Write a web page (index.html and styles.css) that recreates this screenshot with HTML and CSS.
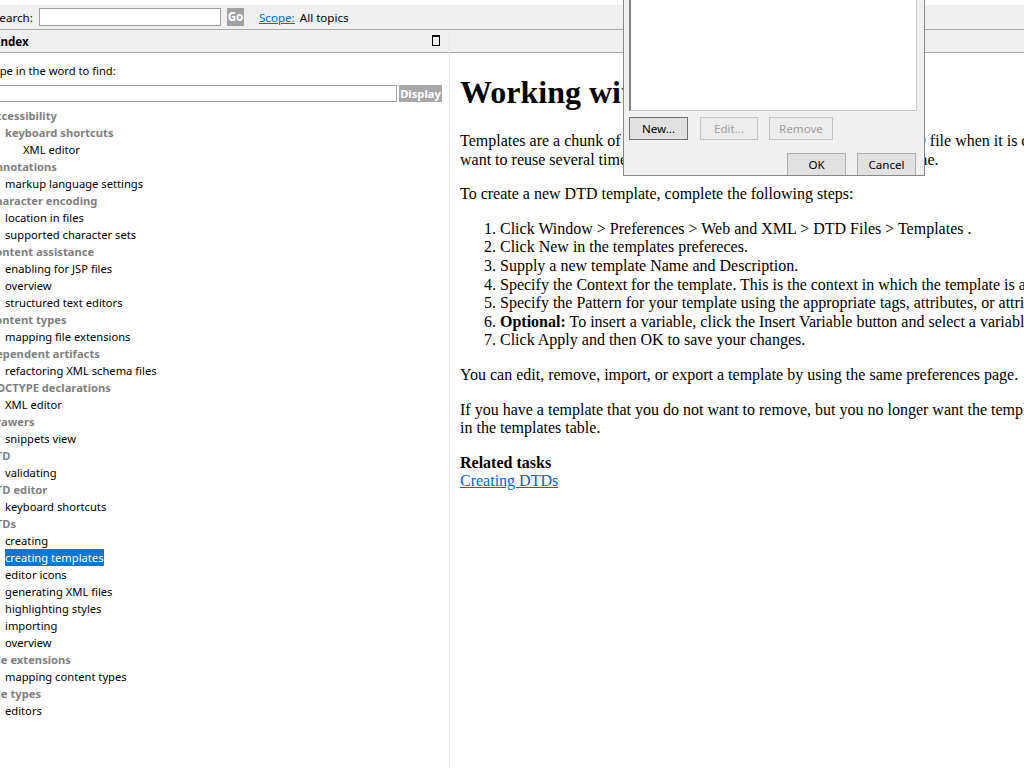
FILE: index.html
```html
<!DOCTYPE html>
<html>
<head>
<meta charset="utf-8">
<link rel="stylesheet" href="styles.css">
</head>
<body>
<div class="page">
  <div class="topbar">
    <span class="search-label">Search:</span>
    <span class="search-input"></span>
    <span class="btn-go">Go</span>
    <a class="scope-link" href="#">Scope:</a>
    <span class="scope-value">All topics</span>
  </div>
  <div class="main">
    <div class="left">
      <div class="pane-hdr">
        <span class="pane-title">Index</span>
        <span class="max-icon"></span>
      </div>
      <div class="left-body">
        <div class="find-label">Type in the word to find:</div>
        <div class="find-row">
          <span class="find-input"></span>
          <span class="btn-display">Display</span>
        </div>
        <ul class="tree">
          <li class="l0">Accessibility</li>
          <li class="l1 grp">keyboard shortcuts</li>
          <li class="l2">XML editor</li>
          <li class="l0">Annotations</li>
          <li class="l1">markup language settings</li>
          <li class="l0">Character encoding</li>
          <li class="l1">location in files</li>
          <li class="l1">supported character sets</li>
          <li class="l0">Content assistance</li>
          <li class="l1">enabling for JSP files</li>
          <li class="l1">overview</li>
          <li class="l1">structured text editors</li>
          <li class="l0">Content types</li>
          <li class="l1">mapping file extensions</li>
          <li class="l0">Dependent artifacts</li>
          <li class="l1">refactoring XML schema files</li>
          <li class="l0">DOCTYPE declarations</li>
          <li class="l1">XML editor</li>
          <li class="l0">Drawers</li>
          <li class="l1">snippets view</li>
          <li class="l0">DTD</li>
          <li class="l1">validating</li>
          <li class="l0">DTD editor</li>
          <li class="l1">keyboard shortcuts</li>
          <li class="l0">DTDs</li>
          <li class="l1">creating</li>
          <li class="l1"><span class="sel">creating templates</span></li>
          <li class="l1">editor icons</li>
          <li class="l1">generating XML files</li>
          <li class="l1">highlighting styles</li>
          <li class="l1">importing</li>
          <li class="l1">overview</li>
          <li class="l0">File extensions</li>
          <li class="l1">mapping content types</li>
          <li class="l0">File types</li>
          <li class="l1">editors</li>
        </ul>
      </div>
    </div>
    <div class="right">
      <div class="pane-hdr"></div>
      <div class="doc">
        <h1>Working with DTD templates</h1>
        <p>Templates are a chunk of predefined code that you can insert into a DTD file when it is created. You may find a template useful when you have a certain piece of code you<br>want to reuse several times, and you do not want to write it out every time.</p>
        <p>To create a new DTD template, complete the following steps:</p>
        <ol>
          <li>Click Window &gt; Preferences &gt; Web and XML &gt; DTD Files &gt; Templates .</li>
          <li>Click New in the templates prefereces.</li>
          <li>Supply a new template Name and Description.</li>
          <li>Specify the Context for the template. This is the context in which the template is available for proposals when content assist is requested.</li>
          <li>Specify the Pattern for your template using the appropriate tags, attributes, or attribute values to be inserted by content assist.</li>
          <li><b>Optional:</b> To insert a variable, click the Insert Variable button and select a variable to be inserted.</li>
          <li>Click Apply and then OK to save your changes.</li>
        </ol>
        <p>You can edit, remove, import, or export a template by using the same preferences page.</p>
        <p>If you have a template that you do not want to remove, but you no longer want the template to appear in the content assist list, go to the Templates preferences page and uncheck its check box<br>in the templates table.</p>
        <div class="related"><b>Related tasks</b><br><a href="#">Creating DTDs</a></div>
      </div>
    </div>
  </div>
  <div class="dialog">
    <div class="listbox"></div>
    <div class="dlg-row">
      <span class="dbtn dbtn-default w59">New...</span>
      <span class="dbtn disabled w58 gap12">Edit...</span>
      <span class="dbtn disabled w64 gap11">Remove</span>
    </div>
    <div class="dlg-row end">
      <span class="dbtn w59">OK</span>
      <span class="dbtn w59 gap11">Cancel</span>
    </div>
  </div>
</div>
</body>
</html>
```
FILE: styles.css
```css
html, body {
  margin: 0;
  padding: 0;
}
body {
  width: 1024px;
  height: 768px;
  overflow: hidden;
  background: #fff;
  font-family: "Noto Sans", "Open Sans", sans-serif;
  font-size: 11.2px;
  color: #000;
}
.page {
  position: relative;
  width: 1024px;
  height: 768px;
  overflow: hidden;
}
.topbar {
  margin-top: 5px;
  height: 24px;
  background: #f0f0f0;
  border-bottom: 1px solid #a8a8a8;
  display: flex;
  align-items: center;
  white-space: nowrap;
  font-size: 11.6px;
}
.search-label {
  margin-left: -7px;
  width: 46px;
}
.search-input {
  width: 180px;
  height: 16px;
  border: 1px solid #a0a0a0;
  background: #fff;
}
.btn-go {
  margin-left: 6px;
  width: 17px;
  height: 18px;
  background: #a0a0a0;
  color: #fff;
  font-weight: bold;
  line-height: 18px;
  text-align: center;
}
.scope-link {
  margin-left: 15px;
  color: #0066cc;
  text-decoration: underline;
}
.scope-value {
  margin-left: 5px;
}
.main {
  display: flex;
  height: 739px;
}
.left {
  width: 449px;
  border-right: 1px solid #e6e6e6;
  overflow: hidden;
}
.right {
  flex: 1;
  overflow: hidden;
}
.pane-hdr {
  height: 22px;
  background: #f0f0f0;
  border-bottom: 1px solid #a8a8a8;
  display: flex;
  align-items: center;
  position: relative;
}
.pane-title {
  margin-left: -4px;
  font-weight: bold;
  font-size: 11.6px;
}
.max-icon {
  position: absolute;
  left: 432px;
  top: 5px;
  width: 6px;
  height: 8px;
  border: 1px solid #000;
  border-top-width: 2px;
}
.left-body {
  margin-left: -12px;
  padding-top: 9px;
}
.find-label {
  height: 17px;
  line-height: 17px;
}
.find-row {
  margin-top: 6px;
  display: flex;
  height: 17px;
}
.find-input {
  width: 407px;
  height: 15px;
  border: 1px solid #a0a0a0;
  background: #fff;
}
.btn-display {
  margin-left: 2px;
  width: 43px;
  height: 17px;
  background: #a8a8a8;
  color: #fff;
  font-weight: bold;
  line-height: 17px;
  text-align: center;
}
.tree {
  list-style: none;
  margin: 5px 0 0 0;
  padding: 0;
  white-space: nowrap;
}
.tree li {
  height: 17px;
  line-height: 17px;
}
.tree .l0, .tree .grp {
  font-weight: bold;
  color: #7f7f7f;
}
.tree .l1 {
  padding-left: 17px;
}
.tree .l2 {
  padding-left: 35px;
}
.sel {
  background: #0078d7;
  color: #fff;
  padding: 1px 0;
}
.doc {
  padding-left: 10px;
  width: 1400px;
  font-family: "Liberation Serif", "Times New Roman", serif;
  font-size: 16px;
  line-height: 18.6px;
}
.doc h1 {
  font-size: 32px;
  line-height: 37px;
  margin: 21px 0;
}
.doc p {
  margin: 16px 0;
  white-space: nowrap;
}
.doc ol {
  margin: 16px 0;
  padding-left: 40px;
  white-space: nowrap;
}
.related {
  margin: 16px 0;
}
.related a {
  color: #0066cc;
}
.dialog {
  position: absolute;
  left: 623px;
  top: -10px;
  width: 302px;
  height: 186px;
  background: #f0f0f0;
  border: 1px solid #888;
  box-sizing: border-box;
  padding: 0 7px 0 5px;
  overflow: hidden;
  font-size: 11.6px;
}
.listbox {
  height: 120px;
  background: #fff;
  border: 1px solid #c8c8c8;
  border-left: 2px solid #828282;
  border-top: none;
  box-sizing: border-box;
}
.dlg-row {
  display: flex;
  margin-top: 6px;
}
.dlg-row.end {
  justify-content: flex-end;
  margin-top: 13px;
  padding-right: 1px;
}
.dbtn {
  height: 23px;
  box-sizing: border-box;
  border: 1px solid #adadad;
  background: #e1e1e1;
  text-align: center;
  line-height: 21px;
  color: #000;
}
.dbtn-default {
  border-color: #707070;
}
.dbtn.disabled {
  border-color: #c4c4c4;
  background: #ececec;
  color: #a0a0a0;
}
.w58 { width: 58px; }
.w59 { width: 59px; }
.w64 { width: 64px; }
.gap11 { margin-left: 11px; }
.gap12 { margin-left: 12px; }
```
